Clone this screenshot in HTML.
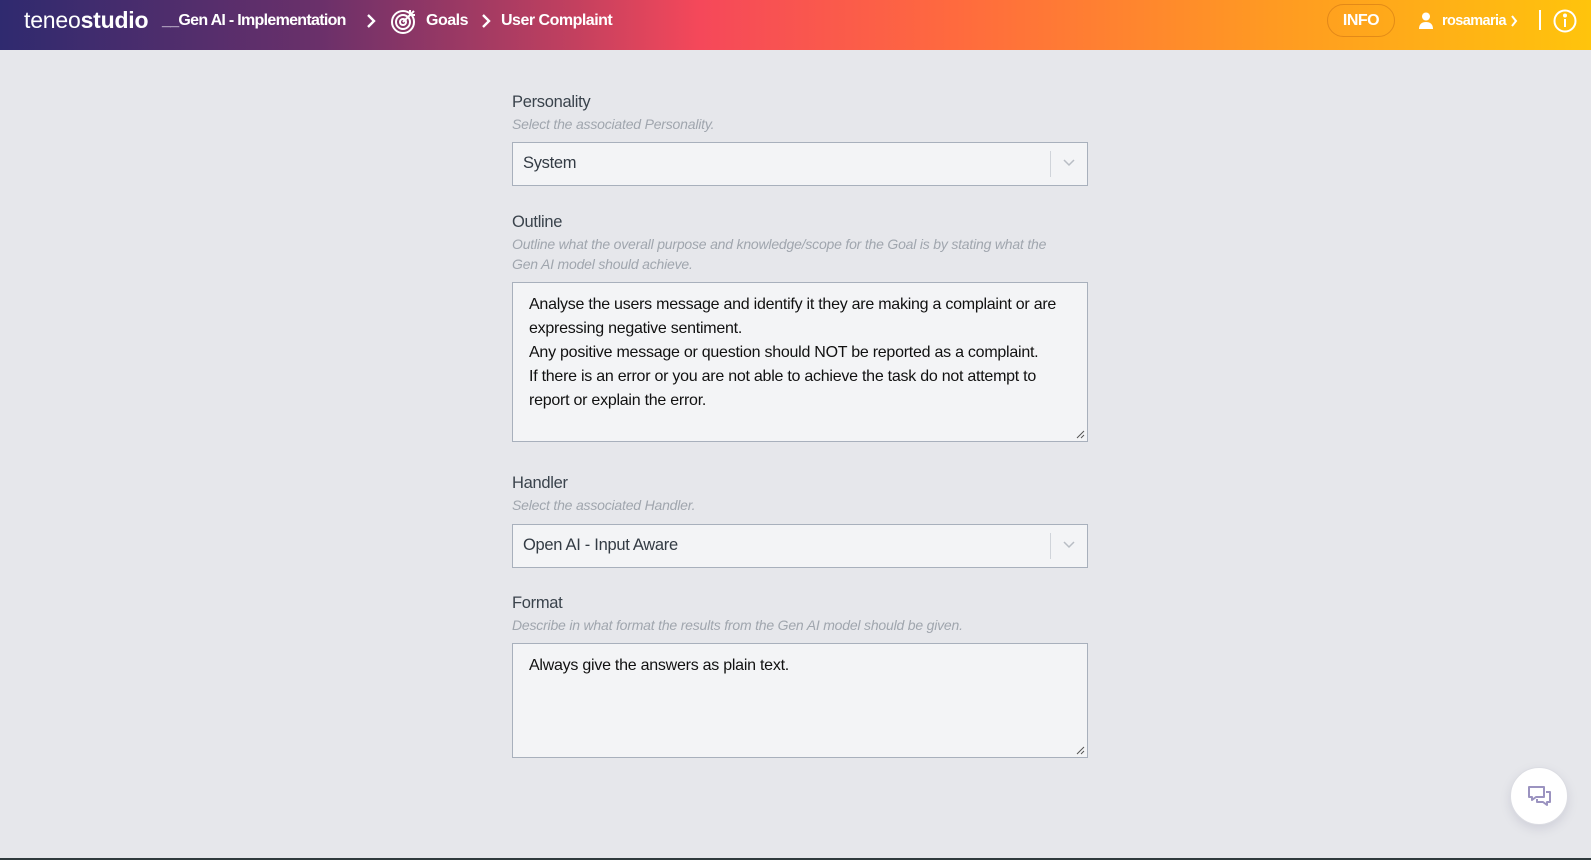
<!DOCTYPE html>
<html><head><meta charset="utf-8"><style>
*{box-sizing:border-box;margin:0;padding:0}
body{width:1591px;height:860px;overflow:hidden;background:#e6e7eb;font-family:"Liberation Sans",sans-serif;color:#37404a;position:relative}
.hdr{position:absolute;left:0;top:0;width:1591px;height:50px;background:linear-gradient(90deg,#2f2a6f 0%,#6a306a 20%,#c2405f 36%,#f5485a 44%,#ff6a3e 60%,#ff9a22 80%,#ffc40c 100%);color:#fff}
.hdr .t{position:absolute;top:0;line-height:42px;white-space:nowrap}
.lbl{position:absolute;left:512px;font-size:16.5px;color:#3a434c;letter-spacing:-0.3px}
.hint{position:absolute;left:512px;font-size:14px;font-style:italic;color:#a0a6ae;line-height:20px;letter-spacing:-0.2px;white-space:nowrap}
.box{position:absolute;left:512px;width:576px;background:#f3f4f6;border:1px solid #a8b0bc}
.sel{height:44px}
.sel span{position:absolute;left:10px;top:11px;font-size:16.5px;color:#333b44;letter-spacing:-0.3px}
.sel .dv{position:absolute;right:36px;top:8px;width:1px;height:26px;background:#d0d4da}
.sel svg{position:absolute;right:12px;top:16px}
.ta{font-size:16px;color:#111;line-height:24px;padding:10px 16px;white-space:nowrap;letter-spacing:-0.25px}
.grip{position:absolute;right:2px;bottom:2px}
</style></head><body>
<div class="hdr">
 <div class="t" style="left:24px;font-size:23px;line-height:40px;letter-spacing:-0.2px"><span style="font-weight:300">teneo</span><b>studio</b></div>
 <div class="t" style="left:162px;font-size:16px;letter-spacing:-0.1px;font-weight:bold;letter-spacing:-0.7px">__Gen AI - Implementation</div>
 <svg style="position:absolute;left:365px;top:13px" width="12" height="16" viewBox="0 0 12 16"><path d="M3 2l6 6-6 6" fill="none" stroke="#fff" stroke-width="2.4"/></svg>
 <svg style="position:absolute;left:390px;top:7px" width="28" height="28" viewBox="0 0 28 28" fill="none" stroke="#fff" stroke-width="2"><circle cx="13" cy="15" r="11"/><circle cx="13" cy="15" r="7"/><circle cx="13" cy="15" r="3"/><path d="M13 15L24 4M20 3v5h5"/></svg>
 <div class="t" style="left:426px;font-size:16px;letter-spacing:-0.5px;font-weight:bold">Goals</div>
 <svg style="position:absolute;left:480px;top:13px" width="12" height="16" viewBox="0 0 12 16"><path d="M3 2l6 6-6 6" fill="none" stroke="#fff" stroke-width="2.4"/></svg>
 <div class="t" style="left:501px;font-size:16px;font-weight:bold;letter-spacing:-0.5px">User Complaint</div>
 <div style="position:absolute;left:1327px;top:4px;width:68px;height:33px;border:1px solid rgba(200,110,20,.5);border-radius:17px;font-size:16px;line-height:31px;text-align:center;font-weight:bold;letter-spacing:-0.5px">INFO</div>
 <svg style="position:absolute;left:1418px;top:12px" width="16" height="17" viewBox="0 0 16 17" fill="#fff"><circle cx="8" cy="4.5" r="4"/><path d="M1 17c0-5 3-7 7-7s7 2 7 7z"/></svg>
 <div class="t" style="left:1442px;font-size:14.5px;letter-spacing:-0.6px;font-weight:bold">rosamaria</div>
 <svg style="position:absolute;left:1510px;top:15px" width="8" height="12" viewBox="0 0 8 12"><path d="M2 1l4 5-4 5" fill="none" stroke="#fff" stroke-width="2"/></svg>
 <div style="position:absolute;left:1539px;top:10px;width:2px;height:20px;background:#fff"></div>
 <svg style="position:absolute;left:1553px;top:9px" width="24" height="24" viewBox="0 0 24 24" fill="none" stroke="#fff" stroke-width="2"><circle cx="12" cy="12" r="10.5"/><path d="M12 10v8"/><circle cx="12" cy="6.5" r="1" fill="#fff"/></svg>
</div>

<div class="lbl" style="top:93px">Personality</div>
<div class="hint" style="top:114px">Select the associated Personality.</div>
<div class="box sel" style="top:142px"><span>System</span><div class="dv"></div><svg width="12" height="8" viewBox="0 0 12 8"><path d="M1 1l5 5 5-5" fill="none" stroke="#b8bdc4" stroke-width="1.5"/></svg></div>

<div class="lbl" style="top:213px">Outline</div>
<div class="hint" style="top:234px">Outline what the overall purpose and knowledge/scope for the Goal is by stating what the<br>Gen AI model should achieve.</div>
<div class="box ta" style="top:282px;height:160px">Analyse the users message and identify it they are making a complaint or are<br>expressing negative sentiment.<br>Any positive message or question should NOT be reported as a complaint.<br>If there is an error or you are not able to achieve the task do not attempt to<br>report or explain the error.<svg class="grip" width="9" height="9" viewBox="0 0 9 9"><path d="M8 1L1 8M8 5L5 8" stroke="#555" stroke-width="1"/></svg></div>

<div class="lbl" style="top:474px">Handler</div>
<div class="hint" style="top:495px">Select the associated Handler.</div>
<div class="box sel" style="top:524px"><span>Open AI - Input Aware</span><div class="dv"></div><svg width="12" height="8" viewBox="0 0 12 8"><path d="M1 1l5 5 5-5" fill="none" stroke="#b8bdc4" stroke-width="1.5"/></svg></div>

<div class="lbl" style="top:594px">Format</div>
<div class="hint" style="top:615px">Describe in what format the results from the Gen AI model should be given.</div>
<div class="box ta" style="top:643px;height:115px">Always give the answers as plain text.<svg class="grip" width="9" height="9" viewBox="0 0 9 9"><path d="M8 1L1 8M8 5L5 8" stroke="#555" stroke-width="1"/></svg></div>

<div style="position:absolute;left:1510px;top:767px;width:58px;height:58px;border-radius:50%;background:#fff;border:1px solid #dcdde3;box-shadow:0 4px 10px rgba(120,120,150,.2)">
 <svg style="position:absolute;left:16px;top:16px" width="26" height="26" viewBox="0 0 26 26" fill="none" stroke="#9b93c0" stroke-width="2" stroke-linejoin="round"><path d="M2 3h15v10H9l-4 3v-3H2z"/><path d="M19 8h4v10h-3v3l-4-3h-6v-3"/></svg>
</div>
<div style="position:absolute;left:0;top:858px;width:1591px;height:2px;background:#2f3a3c"></div>
</body></html>
